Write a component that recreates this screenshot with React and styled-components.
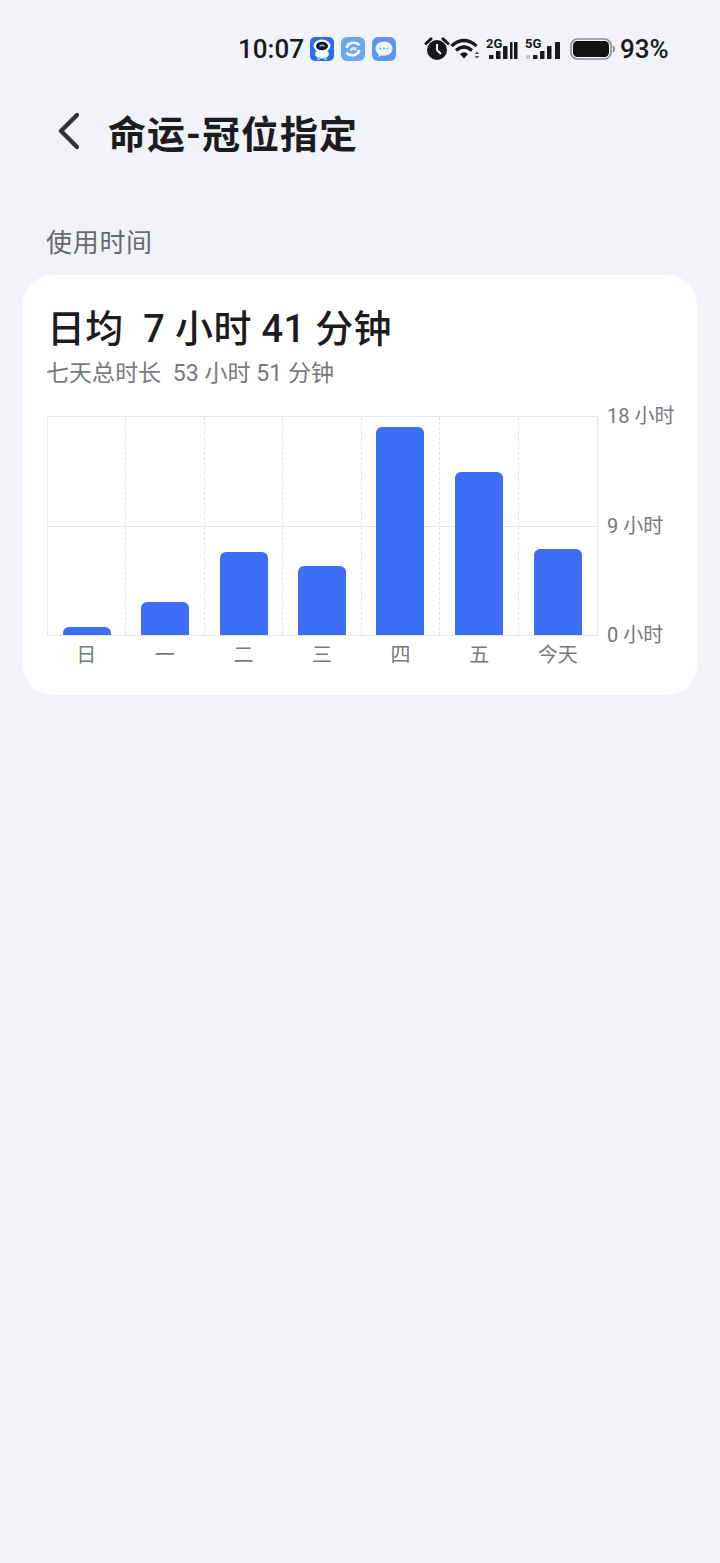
import React from "react";
import styled, { createGlobalStyle } from "styled-components";

const FONT = `Roboto, "Noto Sans CJK SC", sans-serif`;

const days = [
  { label: "日", height: 8 },
  { label: "一", height: 33 },
  { label: "二", height: 83 },
  { label: "三", height: 69 },
  { label: "四", height: 208 },
  { label: "五", height: 163 },
  { label: "今天", height: 86 },
];

const GlobalStyle = createGlobalStyle`
  html, body {
    margin: 0;
    padding: 0;
    background: #f1f3f8;
    font-family: ${FONT};
  }
`;

const Page = styled.div`
  width: 720px;
  height: 1563px;
  background: #f1f3f8;
  overflow: hidden;
`;

const StatusBar = styled.div`
  height: 34px;
  padding: 32px 0 0 238px;
  display: flex;
  align-items: center;
  color: #1a1a1a;
`;

const Clock = styled.span`
  font-size: 26px;
  font-weight: 500;
  width: 72px;
`;

const AppIcons = styled.div`
  display: flex;
  gap: 7px;
`;

const Indicators = styled.div`
  margin-left: 28px;
  display: flex;
  align-items: center;
`;

const Battery = styled.span`
  font-size: 26px;
  font-weight: 500;
  margin-left: 4px;
`;

const Header = styled.div`
  height: 48px;
  margin-top: 41px;
  padding-left: 57px;
  display: flex;
  align-items: center;
  gap: 29px;
`;

const Title = styled.h1`
  margin: 0;
  font-size: 38px;
  font-weight: 700;
  color: #1c1c1e;
  letter-spacing: 1px;
`;

const SectionLabel = styled.div`
  margin: 70px 0 0 46px;
  height: 36px;
  line-height: 36px;
  font-size: 26px;
  letter-spacing: 0.7px;
  color: #66686c;
`;

const Card = styled.section`
  margin: 14px 23px 0;
  height: 420px;
  box-sizing: border-box;
  padding: 29px 24px 0;
  background: #ffffff;
  border-radius: 30px;
`;

const Average = styled.div`
  height: 50px;
  line-height: 50px;
  font-size: 38px;
  font-weight: 500;
  color: #1c1c1e;
  white-space: pre;
  letter-spacing: 0.35px;
`;

const Total = styled.div`
  height: 38px;
  line-height: 38px;
  margin-top: 1px;
  margin-left: -1px;
  font-size: 23px;
  color: #77797d;
  white-space: pre;
  letter-spacing: 0.05px;
`;

const Chart = styled.div`
  margin-top: 23px;
  display: grid;
  grid-template-columns: 551px 1fr;
`;

const Plot = styled.div`
  height: 220px;
  box-sizing: border-box;
  display: grid;
  grid-template-columns: repeat(7, 1fr);
  border: 1px solid #e6e7ea;
  background: linear-gradient(#e6e7ea, #e6e7ea) 0 109px / 100% 1px no-repeat;
`;

const Column = styled.div`
  display: flex;
  justify-content: center;
  align-items: flex-end;
  border-right: ${(p) => (p.$last ? "none" : "1px dashed #e4e5e9")};
`;

const Bar = styled.div`
  width: 48px;
  height: ${(p) => p.$h}px;
  background: #3c6ef6;
  border-radius: 6px 6px 0 0;
`;

const Axis = styled.div`
  height: 219px;
  margin-left: 9px;
  display: flex;
  flex-direction: column;
  justify-content: space-between;
  font-size: 20px;
  color: #77797d;
`;

const AxisLabel = styled.span`
  height: 0;
  line-height: 0;
  white-space: pre;
`;

const Days = styled.div`
  width: 550px;
  display: grid;
  grid-template-columns: repeat(7, 1fr);
  margin-top: 5px;
`;

const Day = styled.span`
  text-align: center;
  font-size: 20px;
  line-height: 28px;
  color: #77797d;
`;

const BackIcon = () => (
  <svg width="22" height="38" viewBox="0 0 22 38" fill="none">
    <path d="M20 3 L4 19 L20 35" stroke="#303134" strokeWidth="4.4" strokeLinecap="round" strokeLinejoin="round" />
  </svg>
);

const RobotIcon = () => (
  <svg width="24" height="24" viewBox="0 0 24 24">
    <rect width="24" height="24" rx="5" fill="#2c6df0" />
    <ellipse cx="12" cy="17" rx="7" ry="4.5" fill="#fff" />
    <rect x="7" y="20" width="3" height="3" fill="#7fc4ff" />
    <rect x="14" y="20" width="3" height="3" fill="#7fc4ff" />
    <ellipse cx="12" cy="9" rx="8.5" ry="6.5" fill="#fff" />
    <ellipse cx="12" cy="9" rx="6" ry="4.3" fill="#14151a" />
    <path d="M9.5 9.5 Q12 7 14.5 9.5" stroke="#6fe3d8" strokeWidth="1.2" fill="none" />
  </svg>
);

const SyncIcon = () => (
  <svg width="24" height="24" viewBox="0 0 24 24">
    <rect width="24" height="24" rx="6" fill="#6aa7f4" />
    <path d="M18.5 8.5 A7.5 7.5 0 0 0 5.5 11" stroke="#fff" strokeWidth="2.6" fill="none" />
    <path d="M5.5 15.5 A7.5 7.5 0 0 0 18.5 13" stroke="#fff" strokeWidth="2.6" fill="none" />
    <path d="M9 12 Q12 8.5 15.5 11 L15.5 14 Q12 11.5 9 15 Z" fill="#dbeafc" />
  </svg>
);

const ChatIcon = () => (
  <svg width="24" height="24" viewBox="0 0 24 24">
    <rect width="24" height="24" rx="6" fill="#5c94f2" />
    <path d="M12 4.5 C6.8 4.5 3.5 7.7 3.5 11.6 C3.5 14 4.7 15.9 6.7 17.2 L6.2 20 L9.6 18.4 C10.4 18.6 11.2 18.7 12 18.7 C17.2 18.7 20.5 15.5 20.5 11.6 C20.5 7.7 17.2 4.5 12 4.5 Z" fill="#eef4fe" />
    <circle cx="8.5" cy="11.6" r="1" fill="#6f9ff0" />
    <circle cx="12" cy="11.6" r="1" fill="#6f9ff0" />
    <circle cx="15.5" cy="11.6" r="1" fill="#6f9ff0" />
  </svg>
);

const AlarmIcon = () => (
  <svg width="26" height="24" viewBox="0 0 26 24">
    <circle cx="13" cy="13" r="10" fill="#17181a" />
    <path d="M2 6.5 L7 1.8 M24 6.5 L19 1.8" stroke="#17181a" strokeWidth="3" strokeLinecap="round" />
    <path d="M13 7 V13 L17 17" stroke="#f1f3f8" strokeWidth="2" fill="none" />
  </svg>
);

const WifiIcon = () => (
  <svg width="30" height="24" viewBox="0 0 30 24">
    <g stroke="#17181a" strokeWidth="3.2" fill="none">
      <path d="M1.5 9 Q14 -2 26.5 9" />
      <path d="M6 13.5 Q14 6.5 22 13.5" />
    </g>
    <path d="M10 17 Q14 13.5 18 17 L14 21.5 Z" fill="#17181a" />
    <path d="M24.5 17 L27 14.6 L29.5 17 Z M24.5 19 L27 21.4 L29.5 19 Z" fill="#55575b" />
  </svg>
);

const SignalWrap = styled.div`
  position: relative;
  width: ${(p) => p.$w}px;
  height: 24px;
  margin-left: ${(p) => p.$gap}px;
`;

// Small network tag stays real text; the bars are the drawing
const SignalTag = styled.span`
  position: absolute;
  top: 1px;
  left: 0;
  font-size: 13px;
  font-weight: 700;
  line-height: 12px;
  color: #17181a;
`;

const Signal = ({ tag, gap, width, bars }) => (
  <SignalWrap $w={width} $gap={gap}>
    <SignalTag>{tag}</SignalTag>
    <svg width={width} height="24" viewBox={`0 0 ${width} 24`}>
      {bars.map((b) => (
        <rect key={b.x} x={b.x} y={b.y} width={b.w} height={22 - b.y} rx="0.6" fill={b.dim ? "#c4c6ca" : "#17181a"} />
      ))}
    </svg>
  </SignalWrap>
);

const bars2g = [
  { x: 3, y: 18, w: 4.5 },
  { x: 10, y: 14, w: 4.5 },
  { x: 17, y: 9, w: 4.5 },
  { x: 24, y: 5, w: 2.5 },
  { x: 28, y: 5, w: 3.5 },
];

const bars5g = [
  { x: 1, y: 18, w: 4, dim: true },
  { x: 8, y: 18, w: 4.5 },
  { x: 15, y: 14, w: 4.5 },
  { x: 22, y: 9, w: 4.5 },
  { x: 30, y: 5, w: 5 },
];

const BatteryIcon = () => (
  <svg width="46" height="24" viewBox="0 0 46 24" style={{ marginLeft: 9 }}>
    <rect x="1" y="2" width="40" height="20" rx="6.5" fill="none" stroke="#8b8c90" strokeWidth="1.6" />
    <rect x="3" y="4" width="36" height="16" rx="4.5" fill="#111214" />
    <path d="M43 9 Q45 12 43 15" stroke="#8b8c90" strokeWidth="1.8" fill="none" />
  </svg>
);

export default function App() {
  return (
    <Page>
      <GlobalStyle />
      <StatusBar>
        <Clock>10:07</Clock>
        <AppIcons>
          <RobotIcon />
          <SyncIcon />
          <ChatIcon />
        </AppIcons>
        <Indicators>
          <AlarmIcon />
          <WifiIcon />
          <Signal tag="2G" gap={6} width={33} bars={bars2g} />
          <Signal tag="5G" gap={6} width={36} bars={bars5g} />
          <BatteryIcon />
          <Battery>93%</Battery>
        </Indicators>
      </StatusBar>

      <Header>
        <BackIcon />
        <Title>命运-冠位指定</Title>
      </Header>

      <SectionLabel>使用时间</SectionLabel>

      <Card>
        <Average>{"日均  7 小时 41 分钟"}</Average>
        <Total>{"七天总时长  53 小时 51 分钟"}</Total>
        <Chart>
          <Plot>
            {days.map((d, i) => (
              <Column key={d.label} $last={i === days.length - 1}>
                <Bar $h={d.height} />
              </Column>
            ))}
          </Plot>
          <Axis>
            <AxisLabel>18 小时</AxisLabel>
            <AxisLabel>9 小时</AxisLabel>
            <AxisLabel>0 小时</AxisLabel>
          </Axis>
        </Chart>
        <Days>
          {days.map((d) => (
            <Day key={d.label}>{d.label}</Day>
          ))}
        </Days>
      </Card>
    </Page>
  );
}
